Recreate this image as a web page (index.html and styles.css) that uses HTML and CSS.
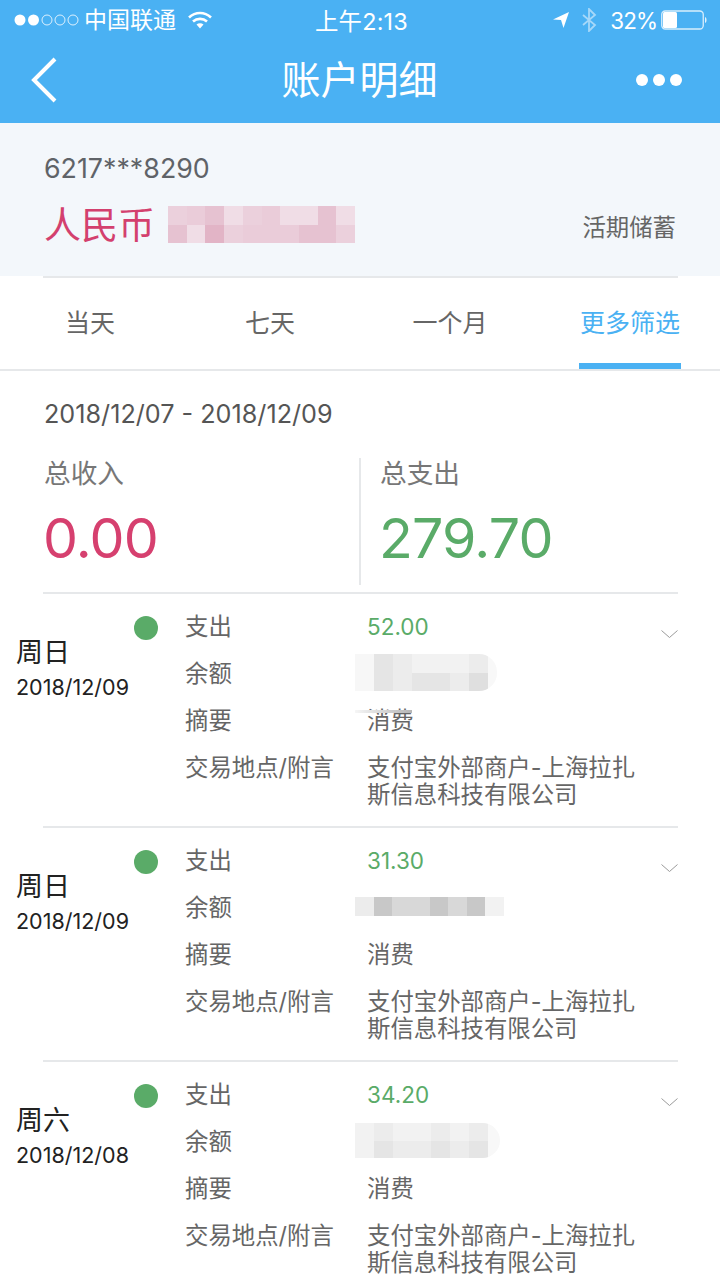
FILE: index.html
```html
<!DOCTYPE html>
<html lang="zh-CN">
<head>
<meta charset="utf-8">
<title>账户明细</title>
<link rel="stylesheet" href="styles.css">
</head>
<body>
<div class="page">
  <header class="top">
    <div class="status">
      <div class="status-left">
        <svg class="signal" width="66" height="14" viewBox="0 0 66 14"><circle cx="7" cy="7" r="5.5" fill="#fff"/><circle cx="20.5" cy="7" r="5.5" fill="#fff"/><circle cx="34" cy="7" r="5" fill="none" stroke="#fff" opacity=".8"/><circle cx="47" cy="7" r="5" fill="none" stroke="#fff" opacity=".8"/><circle cx="60" cy="7" r="5" fill="none" stroke="#fff" opacity=".8"/></svg>
        <span class="carrier">中国联通</span>
        <svg class="wifi" width="24" height="18" viewBox="0 0 24 18"><path d="M1 6.500C7.500.5 16.500.5 23 6.500" fill="none" stroke="#fff" stroke-width="2.600"/><path d="M5 10.500c4-3.500 10-3.500 14 0" fill="none" stroke="#fff" stroke-width="2.600"/><path d="M8.500 13.500c2-1.600 5-1.600 7 0L12 17.500z" fill="#fff"/></svg>
      </div>
      <div class="status-time">上午2:13</div>
      <div class="status-right">
        <svg width="16" height="16" viewBox="0 0 16 16"><path d="M16 0L0 7.500l8 .6 2.500 7.900z" fill="#fff"/></svg>
        <svg class="bt" width="16" height="24" viewBox="0 0 16 24"><path d="M2 7l12 10-6 6V1l6 6L2 17" fill="none" stroke="#a6d8f9" stroke-width="1.800"/></svg>
        <span class="percent">32%</span>
        <svg class="battery" width="47" height="20" viewBox="0 0 47 20"><rect x=".75" y="1" width="41.500" height="18" rx="3.500" fill="none" stroke="#d8eefc" stroke-width="1.300"/><rect x="2" y="2" width="14" height="16" rx="1.500" fill="#fff"/><path d="M44 7c2 .5 2 5.500 0 6z" fill="#e3f2fd"/></svg>
      </div>
    </div>
    <nav class="nav">
      <svg class="back" width="26" height="46" viewBox="0 0 26 46"><path d="M24 2L3 23l21 21" fill="none" stroke="#fff" stroke-width="4"/></svg>
      <h1 class="title">账户明细</h1>
      <svg class="more" width="46" height="12" viewBox="0 0 46 12"><circle cx="6" cy="6" r="6" fill="#fff"/><circle cx="23" cy="6" r="6" fill="#fff"/><circle cx="40" cy="6" r="6" fill="#fff"/></svg>
    </nav>
  </header>

  <section class="account">
    <div class="card-no">6217***8290</div>
    <div class="account-line">
      <span class="currency">人民币</span>
      <div class="mosaic mosaic-pink">
        <i class="p2"></i><i class="p3"></i><i class="p4"></i><i class="p1"></i><i class="p2"></i><i class="p3"></i><i class="p1"></i><i class="p1"></i><i class="p4"></i><i class="p1"></i>
        <i class="p4"></i><i class="p1"></i><i class="p5"></i><i class="p2"></i><i class="p3"></i><i class="p3"></i><i class="p3"></i><i class="p4"></i><i class="p4"></i><i class="p2"></i>
      </div>
      <span class="account-type">活期储蓄</span>
    </div>
  </section>
  <div class="rule"></div>

  <div class="tabs">
    <div class="tab">当天</div>
    <div class="tab">七天</div>
    <div class="tab">一个月</div>
    <div class="tab active">更多筛选</div>
  </div>

  <section class="summary">
    <div class="range">2018/12/07 - 2018/12/09</div>
    <div class="totals">
      <div class="total">
        <div class="total-label">总收入</div>
        <div class="amount income">0.00</div>
      </div>
      <div class="total total-out">
        <div class="total-label">总支出</div>
        <div class="amount expense">279.70</div>
      </div>
    </div>
  </section>

  <div class="rule"></div>
  <article class="row">
    <div class="when"><span class="dot"></span><div class="day">周日</div><div class="date">2018/12/09</div></div>
    <div class="details">
      <div class="label">支出</div><div class="value green">52.00</div>
      <svg class="chev" width="17" height="9" viewBox="0 0 17 9"><path d="M.5.500l8 7 8-7" fill="none" stroke="#9a9a9a" stroke-width="1"/></svg>
      <div class="label">余额</div>
      <div class="value cell-fixed"><div class="mosaic mosaic-a">
        <i class="g0"></i><i class="g3"></i><i class="g2"></i><i class="g1"></i><i class="g1"></i><i class="g1"></i><i class="g2"></i><i class="fade"></i>
        <i class="g0"></i><i class="g3"></i><i class="g2"></i><i class="g3"></i><i class="g3"></i><i class="g2"></i><i class="g6"></i><i class="fade"></i>
      </div></div>
      <div class="label">摘要</div><div class="value smudged">消费</div>
      <div class="label">交易地点/附言</div><div class="value">支付宝外部商户-上海拉扎斯信息科技有限公司</div>
    </div>
  </article>
  <div class="rule"></div>
  <article class="row">
    <div class="when"><span class="dot"></span><div class="day">周日</div><div class="date">2018/12/09</div></div>
    <div class="details">
      <div class="label">支出</div><div class="value green">31.30</div>
      <svg class="chev" width="17" height="9" viewBox="0 0 17 9"><path d="M.5.500l8 7 8-7" fill="none" stroke="#9a9a9a" stroke-width="1"/></svg>
      <div class="label">余额</div>
      <div class="value cell-fixed"><div class="mosaic mosaic-b">
        <i class="g2"></i><i class="g5"></i><i class="g4"></i><i class="g4"></i><i class="g5"></i><i class="g4"></i><i class="g5"></i><i class="g1"></i>
      </div></div>
      <div class="label">摘要</div><div class="value">消费</div>
      <div class="label">交易地点/附言</div><div class="value">支付宝外部商户-上海拉扎斯信息科技有限公司</div>
    </div>
  </article>
  <div class="rule"></div>
  <article class="row">
    <div class="when"><span class="dot"></span><div class="day">周六</div><div class="date">2018/12/08</div></div>
    <div class="details">
      <div class="label">支出</div><div class="value green">34.20</div>
      <svg class="chev" width="17" height="9" viewBox="0 0 17 9"><path d="M.5.500l8 7 8-7" fill="none" stroke="#9a9a9a" stroke-width="1"/></svg>
      <div class="label">余额</div>
      <div class="value cell-fixed"><div class="mosaic mosaic-c">
        <i class="g1"></i><i class="g2"></i><i class="g1"></i><i class="g1"></i><i class="g2"></i><i class="g1"></i><i class="g2"></i><i class="fade"></i>
        <i class="g1"></i><i class="g3"></i><i class="g2"></i><i class="g2"></i><i class="g3"></i><i class="g2"></i><i class="g3"></i><i class="fade"></i>
      </div></div>
      <div class="label">摘要</div><div class="value">消费</div>
      <div class="label">交易地点/附言</div><div class="value">支付宝外部商户-上海拉扎斯信息科技有限公司</div>
    </div>
  </article>
</div>
</body>
</html>
```
FILE: styles.css
```css
* { box-sizing: border-box; }
html, body { margin: 0; padding: 0; background: #fff; }
body {
  width: 720px;
  height: 1281px;
  overflow: hidden;
  font-family: Inter, "Noto Sans CJK SC", sans-serif;
  color: #555;
}
.page { width: 720px; }

/* header */
.top { background: #4ab1f3; height: 123px; color: #fff; }
.status {
  height: 40px;
  display: grid;
  grid-template-columns: 1fr auto 1fr;
  align-items: center;
  padding: 0 12px 0 13px;
}
.status-left { display: flex; align-items: center; }
.carrier { font-size: 23px; margin-left: 5px; line-height: 40px; }
.wifi { margin-left: 12px; }
.status-time { font-size: 23.400px; letter-spacing: .2px; transform: translateX(1px); }
.status-right { display: flex; align-items: center; justify-content: flex-end; }
.bt { margin-left: 12px; }
.percent { font-size: 22.500px; margin-left: 13px; letter-spacing: -1px; }
.battery { margin-left: 4px; }
.nav {
  height: 83px;
  display: grid;
  grid-template-columns: 1fr auto 1fr;
  align-items: center;
  padding: 0 38px 3px 38px;
}
.back { margin-left: -7px; }
.title { margin: -2px 0 0 -1px; font-size: 39px; font-weight: 400; line-height: 1; }
.more { justify-self: end; }

/* account */
.account { background: #f3f7fb; height: 153px; padding: 28px 44px 0; }
.card-no { font-size: 26.800px; line-height: 34px; color: #5f6368; }
.account-line { display: flex; align-items: center; margin-top: 21px; height: 40px; }
.currency { font-size: 37px; line-height: 40px; color: #d3406e; }
.account-type { font-size: 23.400px; color: #666; margin-left: auto; }
.mosaic { display: grid; }
.mosaic i { display: block; }
.mosaic-pink {
  align-self: flex-start;
  margin-left: 13px;
  width: 187px;
  height: 37px;
  grid-template-columns: repeat(10, 1fr);
  grid-template-rows: repeat(2, 1fr);
}
.p1 { background: #f0dde6; }
.p2 { background: #ebd0dc; }
.p3 { background: #eaccd9; }
.p4 { background: #e6c2d1; }
.p5 { background: #e2b4c6; }

.rule { height: 2px; margin: 0 42px 0 43px; background: #e6e8ea; }

/* tabs */
.tabs {
  display: grid;
  grid-template-columns: repeat(4, 180px);
  height: 93px;
  border-bottom: 2px solid #e6e8ea;
}
.tab { font-size: 25px; text-align: center; line-height: 90px; color: #666; height: 91px; }
.active {
  color: #4ab1f3;
  width: 102px;
  justify-self: center;
  white-space: nowrap;
  border-bottom: 6px solid #4ab1f3;
}

/* summary */
.summary { padding: 26px 0 0 44px; height: 221px; }
.range { font-size: 25.200px; line-height: 34px; color: #555; }
.totals { display: flex; margin-top: 27px; }
.total { width: 315px; height: 127px; }
.total-out { width: 300px; border-left: 2px solid #e6e8ea; padding-left: 19px; }
.total-label { font-size: 26.700px; line-height: 34px; margin-top: -2px; color: #777; }
.amount { font-size: 55.500px; line-height: 76px; margin: 10px 0 0 -1px; letter-spacing: -.8px; }
.income { color: #d6406f; }
.expense { color: #5aab68; }

/* rows */
.row {
  display: grid;
  grid-template-columns: 169px 1fr;
  height: 232px;
  padding: 19px 42px 0 16px;
}
.when { display: flex; flex-direction: column; }
.dot {
  display: block;
  width: 24px;
  height: 24px;
  border-radius: 50%;
  background: #5aab68;
  margin: 3px 0 0 118px;
}
.day { font-size: 27px; line-height: 34px; color: #222; margin-top: -4px; }
.date { font-size: 21.500px; line-height: 28px; color: #222; margin-top: 3px; }
.details {
  display: grid;
  grid-template-columns: 182px 272px 1fr;
  row-gap: 20px;
  align-content: start;
}
.label { font-size: 23.400px; line-height: 27px; color: #666; grid-column: 1; white-space: nowrap; }
.value { font-size: 23.400px; line-height: 27px; color: #666; grid-column: 2; position: relative; }
.green { color: #5aab68; font-size: 22.500px; }
.cell-fixed { height: 27px; }
.chev { justify-self: end; grid-column: 3; grid-row: 1; margin-top: 17px; }
.mosaic-a, .mosaic-c {
  width: 142px;
  height: 37px;
  margin: -6px 0 0 -12px;
  grid-template-columns: repeat(7, 19px) 9px;
  grid-template-rows: repeat(2, 1fr);
  border-radius: 0 18px 18px 0;
  overflow: hidden;
}
.mosaic-c { width: 145px; height: 35px; margin-top: -5px; grid-template-columns: repeat(7, 19px) 12px; }
.mosaic-b {
  width: 149px;
  height: 19px;
  margin: 3px 0 0 -12px;
  grid-template-columns: repeat(8, 1fr);
}
.g0 { background: #f7f7f7; }
.g1 { background: #f2f2f2; }
.g2 { background: #ececec; }
.g3 { background: #e5e5e5; }
.g4 { background: #d8d8d8; }
.g5 { background: #c8c8c8; }
.g6 { background: #dfdfdf; }
.fade { background: #f8f8f8; }
.smudged::before {
  content: "";
  position: absolute;
  left: -12px;
  top: 3px;
  width: 57px;
  height: 3px;
  background: linear-gradient(90deg, #f6f6f6, #b5b5b5);
}
```
